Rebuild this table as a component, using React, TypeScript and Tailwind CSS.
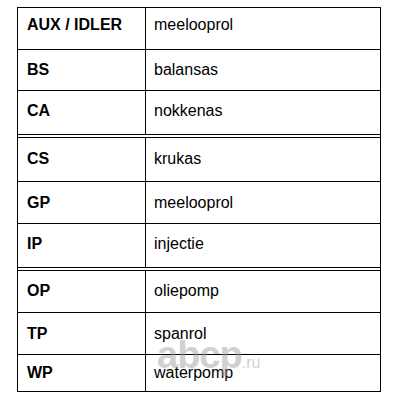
const rows = [
  { code: "AUX / IDLER", name: "meelooprol", h: "h-[42px]", pad: "pb-[7px]", sep: "single" },
  { code: "BS", name: "balansas", h: "h-[41px]", pad: "", sep: "single" },
  { code: "CA", name: "nokkenas", h: "h-[47px]", pad: "pb-[3px]", sep: "double" },
  { code: "CS", name: "krukas", h: "h-[44px]", pad: "pb-[2px]", sep: "single" },
  { code: "GP", name: "meelooprol", h: "h-[42px]", pad: "", sep: "single" },
  { code: "IP", name: "injectie", h: "h-[47px]", pad: "pb-[3px]", sep: "double" },
  { code: "OP", name: "oliepomp", h: "h-[42px]", pad: "pb-[2px]", sep: "single" },
  { code: "TP", name: "spanrol", h: "h-[42px]", pad: "", sep: "single" },
  { code: "WP", name: "waterpomp", h: "h-[36px]", pad: "", sep: "none" },
];

export default function App() {
  return (
    <div
      className="relative h-[400px] w-[400px] overflow-hidden bg-white pl-[17px] pt-[7px] text-black"
      style={{ fontFamily: '"Liberation Sans", Arial, sans-serif' }}
    >
      <div className="w-[364px] border-[1.5px] border-black">
        {rows.map((r) => (
          <div
            key={r.code}
            className={`flex ${r.h} ${
              r.sep === "single"
                ? "border-b border-black"
                : r.sep === "double"
                  ? "border-b-4 border-double border-black"
                  : ""
            }`}
          >
            <div
              className={`flex w-[128px] items-center border-r border-black pl-[9px] text-[16px] font-bold ${r.pad}`}
            >
              {r.code}
            </div>
            <div className={`flex flex-1 items-center pl-[8px] text-[16px] ${r.pad}`}>
              {r.name}
            </div>
          </div>
        ))}
      </div>

      {/* site watermark */}
      <div className="pointer-events-none absolute left-[157px] top-[336px] flex items-baseline text-[#9a9a9a] opacity-45">
        <span className="text-[38px] font-bold leading-none tracking-[-1px]">abcp</span>
        <span className="text-[16px] leading-none">.ru</span>
      </div>
    </div>
  );
}
